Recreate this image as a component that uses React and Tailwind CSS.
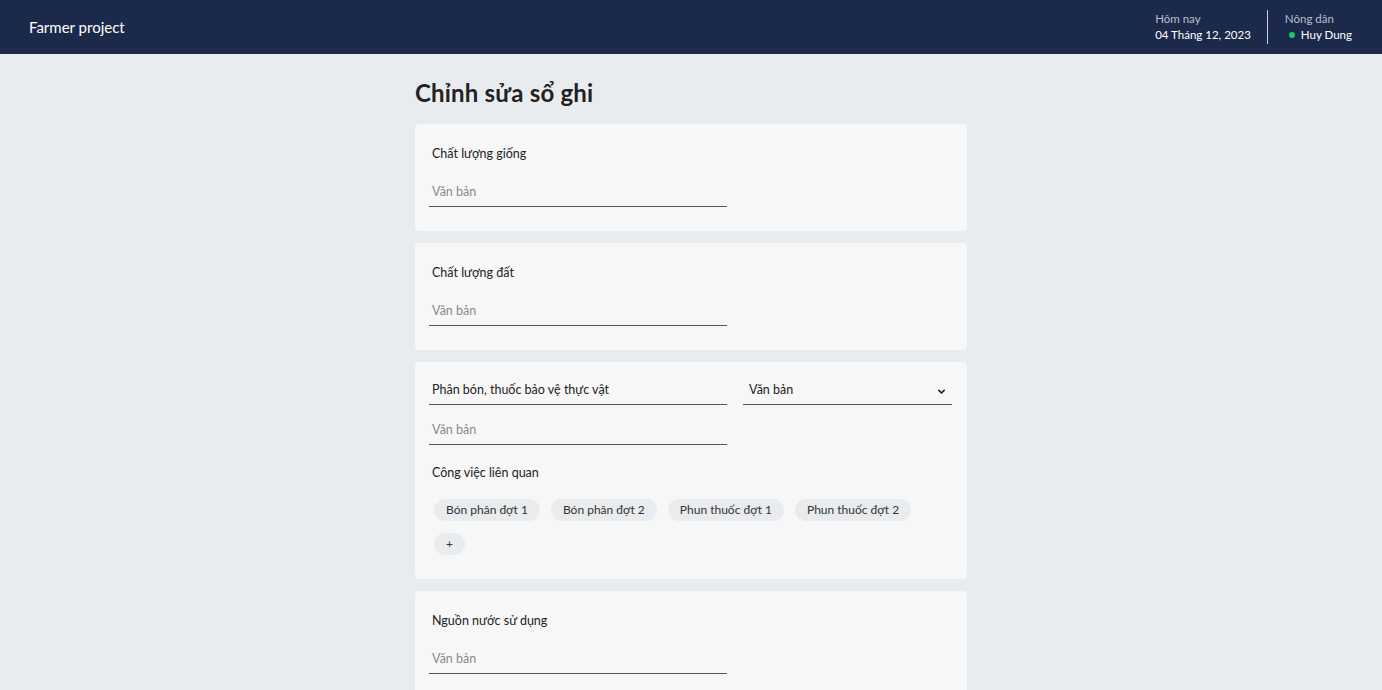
import React from "react";

const fieldLine = "border-b border-[#555] w-[298px] h-[33px] flex items-end pb-[4px] px-[3px] text-[12.5px]";

const TextField = ({ placeholder = "Văn bản", value }) => (
  <div className={fieldLine}>
    {value ? (
      <span className="text-[#222]">{value}</span>
    ) : (
      <span className="text-[#8a8a8a]">{placeholder}</span>
    )}
  </div>
);

const Card = ({ children }) => (
  <div className="rounded-[4px] bg-[#f7f7f7] px-[14px] pt-[22px] pb-[24px]">{children}</div>
);

const SimpleCard = ({ label }) => (
  <Card>
    <p className="text-[12.5px] text-[#222] px-[3px] leading-[16px]">{label}</p>
    <div className="mt-[12px]">
      <TextField />
    </div>
  </Card>
);

const chips = ["Bón phân đợt 1", "Bón phân đợt 2", "Phun thuốc đợt 1", "Phun thuốc đợt 2"];

const App = () => {
  return (
    <div
      className="min-h-screen bg-[#e9ecef]"
      style={{ fontFamily: "Lato, 'Noto Sans', sans-serif" }}
    >
      <header className="h-[54px] bg-[#1b2a4b] flex items-center justify-between pl-[29px] pr-[30px]">
        <span className="text-white text-[15px]">Farmer project</span>
        <div className="flex items-center">
          <div className="flex flex-col text-[11.5px] leading-[16px] pr-[16px]">
            <span className="text-[#b8bfcc]">Hôm nay</span>
            <span className="text-white">04 Tháng 12, 2023</span>
          </div>
          <div className="w-px h-[34px] bg-[#c9ced8]" />
          <div className="flex flex-col text-[11.5px] leading-[16px] pl-[17px]">
            <span className="text-[#b8bfcc]">Nông dân</span>
            <span className="text-white flex items-center gap-[6px] pl-[4px]">
              <span className="inline-block w-[6px] h-[6px] rounded-full bg-[#22c55e]" />
              Huy Dung
            </span>
          </div>
        </div>
      </header>

      <main className="w-[552px] mx-auto pt-[24px]">
        <h1 className="text-[24px] font-bold text-[#222] leading-[30px] mb-[16px] tracking-[0.2px]">Chỉnh sửa sổ ghi</h1>
        <div className="flex flex-col gap-[12px]">
          <SimpleCard label="Chất lượng giống" />
          <SimpleCard label="Chất lượng đất" />

          <Card>
            <div className="-mt-[12px] flex items-end gap-[16px]">
              <TextField value="Phân bón, thuốc bảo vệ thực vật" />
              <div className="border-b border-[#555] w-[209px] h-[33px] flex items-end justify-between pb-[4px] px-[6px] text-[12.5px] text-[#222]">
                <span>Văn bản</span>
                <svg width="9" height="9" viewBox="0 0 24 24" fill="none" stroke="#222" strokeWidth="4.5" strokeLinecap="round" strokeLinejoin="round" className="mb-[4px]">
                  <path d="M5 9l7 7 7-7" />
                </svg>
              </div>
            </div>
            <div className="mt-[7px]">
              <TextField />
            </div>
            <p className="mt-[20px] text-[12.5px] text-[#222] px-[3px] leading-[16px]">Công việc liên quan</p>
            <div className="mt-[18px] pl-[5px] flex flex-col gap-[12px]">
              <div className="flex gap-[11px]">
                {chips.map((c) => (
                  <span key={c} className="h-[22px] px-[12px] rounded-full bg-[#e9ecef] text-[12px] text-[#333] flex items-center">
                    {c}
                  </span>
                ))}
              </div>
              <div className="flex">
                <span className="h-[22px] w-[31px] rounded-full bg-[#e9ecef] text-[12px] text-[#333] flex items-center justify-center">
                  +
                </span>
              </div>
            </div>
          </Card>

          <SimpleCard label="Nguồn nước sử dụng" />
        </div>
      </main>
    </div>
  );
};

export default App;
